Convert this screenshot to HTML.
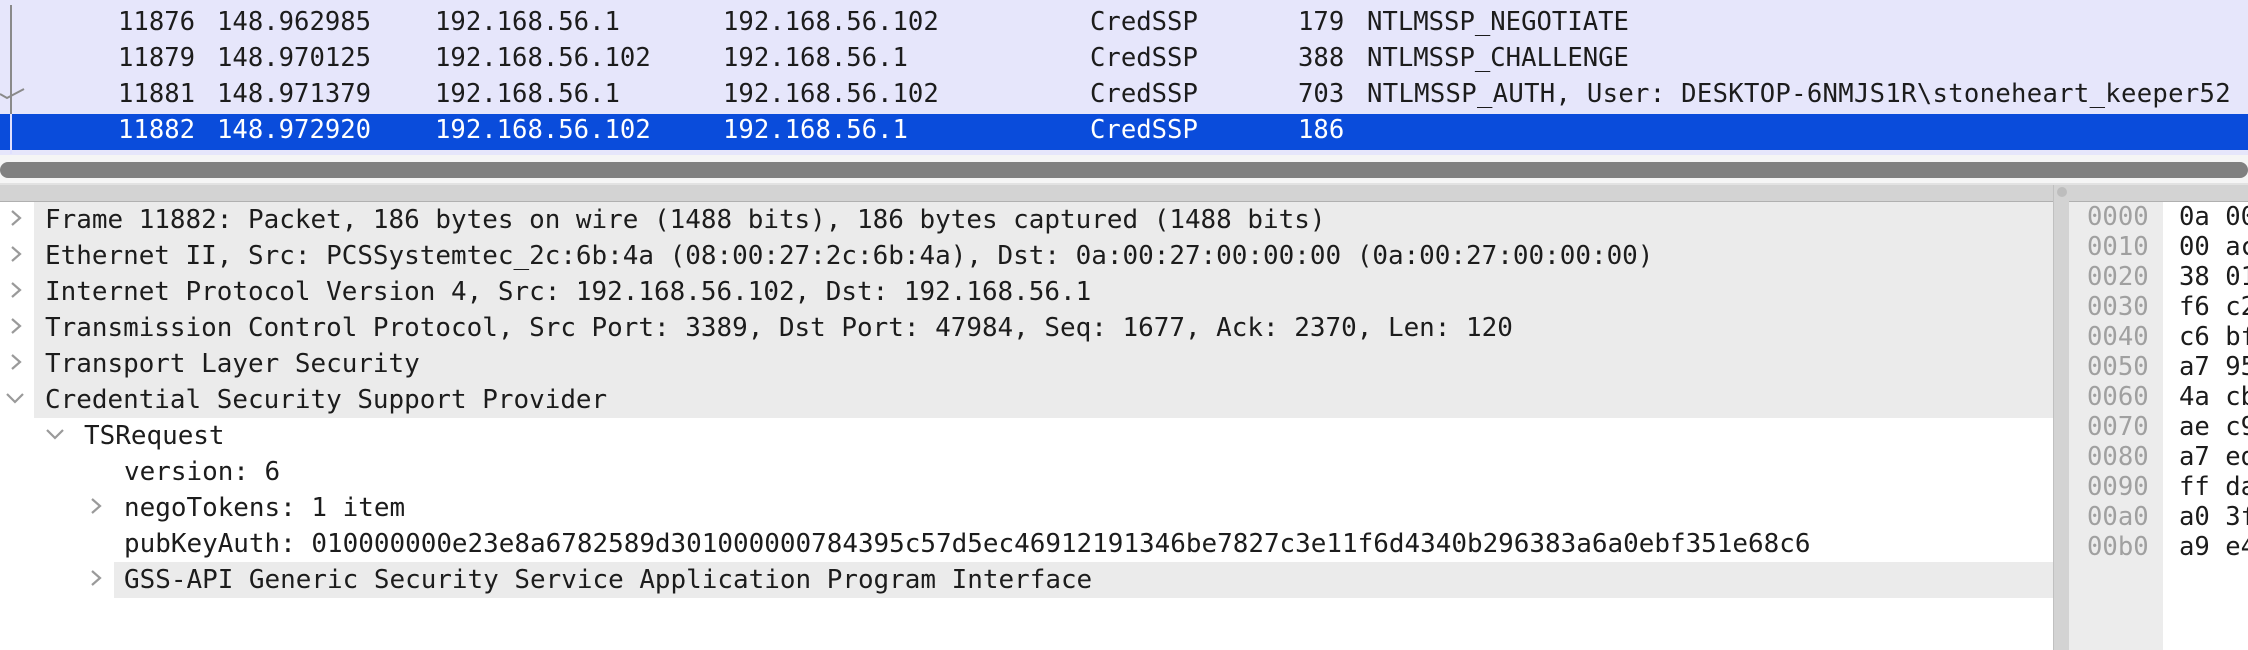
<!DOCTYPE html>
<html><head><meta charset="utf-8"><style>
*{margin:0;padding:0;box-sizing:border-box}
body{width:2248px;height:650px;overflow:hidden;background:#fff;position:relative;font-family:"DejaVu Sans Mono","Liberation Mono",monospace;font-size:25.6px;color:#1c1c1c}
.a{position:absolute;white-space:pre}
.list{position:absolute;left:0;top:0;width:2248px;height:155px;background:#e6e6fb}
.row{position:absolute;left:0;width:2248px;height:36px;line-height:32px}
.sel{background:#0a4cdb;color:#fff}
.d{position:absolute;height:36px;line-height:36px;white-space:pre;font-size:25.95px}
.g{background:#ebebeb}
.h{position:absolute;height:30px;line-height:30px;white-space:pre}
</style></head><body>
<div class="list">
 <div class="row" style="top:6px"><span class="a" style="left:118px">11876</span><span class="a" style="left:217px">148.962985</span><span class="a" style="left:435px">192.168.56.1</span><span class="a" style="left:723px">192.168.56.102</span><span class="a" style="left:1090px">CredSSP</span><span class="a" style="left:1298px">179</span><span class="a" style="left:1367px">NTLMSSP_NEGOTIATE</span></div>
 <div class="row" style="top:42px"><span class="a" style="left:118px">11879</span><span class="a" style="left:217px">148.970125</span><span class="a" style="left:435px">192.168.56.102</span><span class="a" style="left:723px">192.168.56.1</span><span class="a" style="left:1090px">CredSSP</span><span class="a" style="left:1298px">388</span><span class="a" style="left:1367px">NTLMSSP_CHALLENGE</span></div>
 <div class="row" style="top:78px"><span class="a" style="left:118px">11881</span><span class="a" style="left:217px">148.971379</span><span class="a" style="left:435px">192.168.56.1</span><span class="a" style="left:723px">192.168.56.102</span><span class="a" style="left:1090px">CredSSP</span><span class="a" style="left:1298px">703</span><span class="a" style="left:1367px;letter-spacing:0.3px">NTLMSSP_AUTH, User: DESKTOP-6NMJS1R\stoneheart_keeper52</span></div>
 <div class="row sel" style="top:114px"><span class="a" style="left:118px">11882</span><span class="a" style="left:217px">148.972920</span><span class="a" style="left:435px">192.168.56.102</span><span class="a" style="left:723px">192.168.56.1</span><span class="a" style="left:1090px">CredSSP</span><span class="a" style="left:1298px">186</span></div>
 <div style="position:absolute;left:10px;top:5px;width:2px;height:110px;background:#8a8a8a"></div>
 <div style="position:absolute;left:10px;top:114px;width:2px;height:40px;background:#e0e0ff"></div>
 <svg style="position:absolute;left:0;top:84px" width="26" height="20"><path d="M0 10 L7 14 L24 5" stroke="#8a8a8a" stroke-width="2" fill="none"/></svg>
</div>
<div style="position:absolute;left:0;top:155px;width:2248px;height:30px;background:#f5f5f5"></div>
<div style="position:absolute;left:0;top:162px;width:2248px;height:16px;background:#808080;border-radius:8px"></div>
<div style="position:absolute;left:0;top:183px;width:2248px;height:2px;background:#e2e2e2"></div>
<div style="position:absolute;left:0;top:185px;width:2248px;height:17px;background:#d3d3d3;border-bottom:1px solid #b0b0b0"></div>
<div style="position:absolute;left:2053px;top:185px;width:16px;height:465px;background:#d3d3d3;border-left:1px solid #c0c0c0"></div>
<div style="position:absolute;left:2057px;top:187px;width:10px;height:10px;border-radius:5px;background:#bdbdbd"></div>
<div style="position:absolute;left:2069px;top:202px;width:94px;height:448px;background:#ececec"></div>

<svg style="position:absolute;left:0;top:202px" width="120" height="400" fill="none" stroke="#9a9a9a" stroke-width="2.2">
 <path d="M12 9 L20 16 L12 23"/><path d="M12 45 L20 52 L12 59"/><path d="M12 81 L20 88 L12 95"/><path d="M12 117 L20 124 L12 131"/><path d="M12 153 L20 160 L12 167"/>
 <path d="M7 192 L15 200 L23 192"/><path d="M47 228 L55 236 L63 228"/>
 <path d="M92 297 L100 304 L92 311"/><path d="M92 369 L100 376 L92 383"/>
</svg>
<div class="d g" style="left:34px;top:202px;width:2019px;padding-left:11px">Frame 11882: Packet, 186 bytes on wire (1488 bits), 186 bytes captured (1488 bits)</div>
<div class="d g" style="left:34px;top:238px;width:2019px;padding-left:11px">Ethernet II, Src: PCSSystemtec_2c:6b:4a (08:00:27:2c:6b:4a), Dst: 0a:00:27:00:00:00 (0a:00:27:00:00:00)</div>
<div class="d g" style="left:34px;top:274px;width:2019px;padding-left:11px">Internet Protocol Version 4, Src: 192.168.56.102, Dst: 192.168.56.1</div>
<div class="d g" style="left:34px;top:310px;width:2019px;padding-left:11px">Transmission Control Protocol, Src Port: 3389, Dst Port: 47984, Seq: 1677, Ack: 2370, Len: 120</div>
<div class="d g" style="left:34px;top:346px;width:2019px;padding-left:11px">Transport Layer Security</div>
<div class="d g" style="left:34px;top:382px;width:2019px;padding-left:11px">Credential Security Support Provider</div>
<div class="d" style="left:84px;top:418px">TSRequest</div>
<div class="d" style="left:124px;top:454px">version: 6</div>
<div class="d" style="left:124px;top:490px">negoTokens: 1 item</div>
<div class="d" style="left:124px;top:526px">pubKeyAuth: 010000000e23e8a6782589d301000000784395c57d5ec46912191346be7827c3e11f6d4340b296383a6a0ebf351e68c6</div>
<div class="d g" style="left:114px;top:562px;width:1939px;padding-left:10px">GSS-API Generic Security Service Application Program Interface</div>

<div style="position:absolute;left:2087px;top:202px;color:#a0a0a0">
<div class="h" style="top:0">0000</div><div class="h" style="top:30px">0010</div><div class="h" style="top:60px">0020</div><div class="h" style="top:90px">0030</div><div class="h" style="top:120px">0040</div><div class="h" style="top:150px">0050</div><div class="h" style="top:180px">0060</div><div class="h" style="top:210px">0070</div><div class="h" style="top:240px">0080</div><div class="h" style="top:270px">0090</div><div class="h" style="top:300px">00a0</div><div class="h" style="top:330px">00b0</div>
</div>
<div style="position:absolute;left:2179px;top:202px">
<div class="h" style="top:0">0a 00</div><div class="h" style="top:30px">00 ac</div><div class="h" style="top:60px">38 01</div><div class="h" style="top:90px">f6 c2</div><div class="h" style="top:120px">c6 bf</div><div class="h" style="top:150px">a7 95</div><div class="h" style="top:180px">4a cb</div><div class="h" style="top:210px">ae c9</div><div class="h" style="top:240px">a7 ed</div><div class="h" style="top:270px">ff da</div><div class="h" style="top:300px">a0 3f</div><div class="h" style="top:330px">a9 e4</div>
</div>
</body></html>
